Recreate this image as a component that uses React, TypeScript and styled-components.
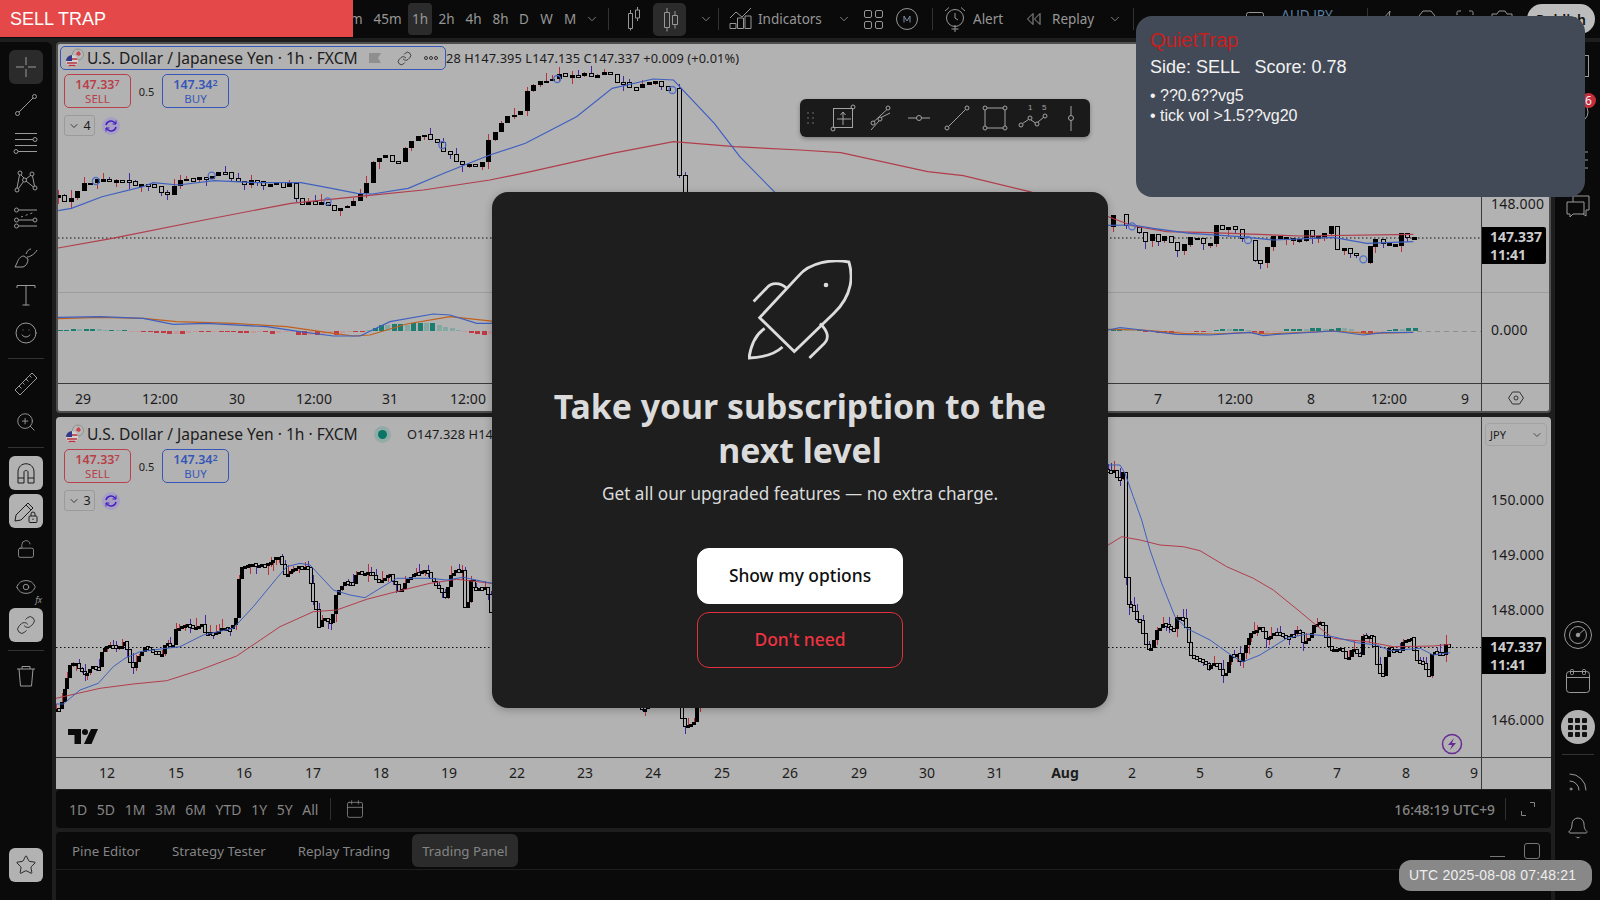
import React from 'react';
import styled, { createGlobalStyle } from 'styled-components';
import { Bell, Calendar, ChevronDown, Eye, Link, LockOpen, Rss, Smile, Star, ZoomIn } from 'lucide-react';

const uiFont = '"Noto Sans", "Open Sans", sans-serif';
const plainFont = '"Liberation Sans", Arial, sans-serif';

const GlobalStyle = createGlobalStyle`
  html, body { margin: 0; padding: 0; background: #1e1e1e; }
  * { box-sizing: border-box; }
`;

type Pt = [number, number];

// zoomed crops were read at different scales, so keys are converted to page px here
const fromTop = (pts: number[][]): Pt[] => pts.map(([x, y]) => [x / 1.96, y / 3]);
const fromLow = (pts: number[][]): Pt[] => pts.map(([x, y]) => [x / 3, 530 + y / 3]);
const fromLowR = (pts: number[][]): Pt[] => pts.map(([x, y]) => [1100 + x / 3, 460 + y / 3]);
const fromTopR = (pts: number[][]): Pt[] => pts.map(([x, y]) => [1100 + x / 3, 200 + y / 3]);
const fromMacd = (pts: number[][]): Pt[] => pts.map(([x, y]) => [x / 3, 230 + y / 3]);

const interp = (pts: Pt[], x: number) => {
  if (x <= pts[0][0]) return pts[0][1];
  for (let i = 1; i < pts.length; i++) {
    if (x <= pts[i][0]) {
      const [x0, y0] = pts[i - 1];
      const [x1, y1] = pts[i];
      return x1 === x0 ? y1 : y0 + ((x - x0) / (x1 - x0)) * (y1 - y0);
    }
  }
  return pts[pts.length - 1][1];
};

const makeRng = (seed: number) => {
  let s = seed;
  return () => {
    s = (s * 16807) % 2147483647;
    return s / 2147483647;
  };
};

type Bar = { x: number; top: number; bottom: number; filled: boolean; wickTop: number; wickBottom: number };

const buildBars = (keys: Pt[], from: number, to: number, step: number, seed: number, noise: number, wick: number) => {
  const rnd = makeRng(seed);
  const bars: Bar[] = [];
  let prev = interp(keys, from);
  for (let x = from; x <= to; x += step) {
    const close = interp(keys, x + step / 2) + (rnd() - 0.5) * noise;
    const top = Math.min(prev, close);
    const bottom = Math.max(prev, close);
    bars.push({
      x,
      top,
      bottom,
      filled: close < prev,
      wickTop: top - (rnd() > 0.5 ? rnd() * wick : 0),
      wickBottom: bottom + (rnd() > 0.6 ? rnd() * wick : 0),
    });
    prev = close;
  }
  return bars;
};

const topLeftKeys = fromTop([
  [114, 590], [124, 598], [140, 610], [160, 560], [190, 540], [250, 542], [270, 548], [300, 560], [340, 582], [360, 540], [410, 540],
  [440, 520], [480, 545], [540, 552], [575, 555], [590, 605], [640, 615], [665, 630], [700, 600], [720, 575], [730, 500], [760, 465],
  [790, 490], [805, 425], [830, 405], [850, 415], [890, 470], [905, 500], [950, 495], [965, 420], [995, 345], [1030, 335], [1040, 270],
  [1065, 250], [1100, 230], [1165, 225], [1200, 212], [1215, 245], [1250, 260], [1290, 245], [1310, 280], [1322, 262],
]);

// [x, top, bottom, filled] as read from the crop right of the dialog
const topRightBars: Bar[] = ([
  [40, 46, 80, 1], [78, 42, 75, 0], [118, 82, 97, 0], [136, 98, 124, 0], [157, 102, 124, 1], [175, 103, 125, 0], [193, 108, 124, 1],
  [214, 108, 128, 0], [232, 128, 152, 0], [253, 133, 152, 1], [271, 112, 134, 1], [290, 113, 116, 1], [310, 116, 130, 0], [329, 129, 131, 1],
  [349, 75, 132, 1], [367, 76, 88, 0], [385, 80, 90, 1], [406, 78, 88, 0], [425, 88, 116, 0], [464, 120, 182, 0], [481, 182, 187, 0],
  [502, 142, 188, 1], [520, 108, 142, 1], [540, 109, 111, 1], [558, 112, 114, 1], [578, 115, 119, 1], [597, 117, 119, 1], [617, 90, 122, 1],
  [637, 90, 110, 0], [655, 109, 112, 1], [673, 100, 112, 1], [694, 78, 102, 1], [712, 78, 148, 0], [731, 145, 148, 1], [751, 146, 160, 0],
  [769, 160, 166, 0], [809, 138, 190, 1], [826, 118, 140, 1], [848, 118, 130, 0], [866, 129, 131, 1], [886, 133, 136, 1], [904, 100, 137, 1],
  [922, 100, 112, 0], [943, 111, 113, 1],
] as number[][]).map(([x, t, b, f], i) => {
  const rnd = makeRng(i * 97 + 13);
  const wt = rnd() * 30;
  const wb = rnd() * 24;
  return {
    x: 1100 + x / 3,
    top: 200 + t / 3,
    bottom: 200 + b / 3,
    filled: !!f,
    wickTop: 200 + (t - wt) / 3,
    wickBottom: 200 + (b + wb) / 3,
  };
});

const topBars: Bar[] = [
  ...buildBars(topLeftKeys, 58, 672, 6.42, 4711, 6, 8),
  { x: 678.5, top: 88, bottom: 175, filled: false, wickTop: 84, wickBottom: 178 },
  { x: 685, top: 175, bottom: 260, filled: false, wickTop: 172, wickBottom: 260 },
  ...topRightBars,
];

const topBlue: Pt[] = [
  ...fromTop([
    [114, 632], [140, 625], [200, 590], [280, 560], [300, 548], [350, 555], [420, 542], [500, 548], [590, 548], [650, 565], [700, 580], [730, 582],
    [800, 565], [870, 520], [960, 465], [1030, 430], [1130, 350], [1200, 265], [1280, 237], [1320, 240], [1400, 370], [1450, 470], [1540, 610],
  ]),
  ...fromTopR([[-100, 60], [25, 76], [100, 75], [160, 85], [270, 100], [420, 110], [520, 120], [640, 115], [700, 112], [800, 130], [940, 125]]),
];
const topRed: Pt[] = [
  [58, 248],
  ...fromTop([
    [220, 715], [400, 660], [570, 610], [700, 590], [830, 570], [960, 540], [1040, 515], [1200, 460], [1320, 425], [1440, 440], [1568, 450],
    [1648, 458], [1818, 515], [1888, 527], [2018, 575],
  ]),
  ...fromTopR([[25, 50], [100, 78], [200, 95], [330, 98], [600, 108], [940, 103]]),
];

const lowKeys: Pt[] = [
  ...fromLow([
    [168, 540], [185, 535], [195, 485], [205, 450], [213, 405], [235, 400], [245, 425], [265, 430], [285, 410], [305, 410], [310, 360], [330, 350],
    [370, 345], [385, 330], [388, 385], [405, 415], [415, 390], [440, 350], [470, 365], [490, 370], [500, 340], [525, 345], [530, 295], [560, 285],
    [590, 290], [610, 280], [615, 310], [650, 310], [670, 295], [700, 295], [715, 260], [720, 150], [730, 110], [760, 105], [800, 105], [840, 80],
    [860, 135], [890, 110], [930, 115], [940, 200], [955, 240], [960, 295], [975, 260], [1000, 280], [1015, 185], [1040, 155], [1065, 165], [1075, 130],
    [1120, 125], [1140, 160], [1175, 130], [1205, 190], [1225, 150], [1250, 130], [1280, 120], [1300, 150], [1325, 180], [1340, 205], [1358, 130],
    [1390, 115], [1398, 215], [1402, 262], [1408, 215], [1415, 150], [1430, 180], [1465, 170], [1475, 250],
  ]),
  [640, 702], [646, 712], [650, 690], [680, 700], [686, 727], [696, 722], [700, 690], [720, 600], [1000, 500],
  ...fromLowR([
    [25, 30], [45, 30], [60, 65], [73, 40], [75, 350], [82, 350], [85, 430], [105, 440], [110, 480], [130, 480], [135, 550], [145, 555], [155, 580],
    [175, 510], [195, 490], [230, 510], [235, 475], [255, 475], [265, 520], [275, 580], [295, 600], [310, 600], [330, 625], [350, 605], [365, 630],
    [378, 650], [395, 590], [415, 580], [425, 605], [440, 560], [455, 520], [490, 500], [500, 540], [525, 520], [560, 525], [590, 525], [600, 505],
    [615, 555], [635, 530], [650, 490], [670, 485], [680, 525], [695, 575], [730, 565], [745, 605], [760, 565], [785, 585], [790, 525], [820, 530],
    [830, 570], [840, 640], [855, 650], [865, 565], [905, 570], [915, 540], [945, 530], [950, 600], [975, 610], [990, 650], [1000, 575], [1020, 575],
    [1035, 590], [1042, 550], [1050, 555],
  ]),
];
const lowBars = buildBars(lowKeys, 56, 1450, 2.86, 9127, 2.5, 10);

const lowBlue: Pt[] = [
  ...fromLow([
    [168, 522], [190, 522], [240, 480], [295, 460], [340, 410], [375, 385], [420, 365], [500, 355], [540, 350], [610, 315], [700, 295], [760, 230],
    [830, 145], [860, 110], [900, 100], [930, 105], [1000, 180], [1050, 195], [1095, 203], [1140, 175], [1190, 145], [1290, 145], [1340, 150],
    [1390, 142], [1475, 160], [1600, 200],
  ]),
  ...fromLowR([
    [0, 15], [25, 15], [60, 15], [75, 40], [100, 110], [125, 180], [150, 270], [185, 370], [225, 470], [260, 505], [330, 540], [400, 590], [430, 605],
    [480, 585], [560, 535], [620, 522], [700, 530], [770, 548], [830, 555], [870, 572], [960, 565], [1000, 585], [1050, 578],
  ]),
];
const lowRed: Pt[] = [
  ...fromLow([
    [168, 505], [300, 475], [400, 462], [500, 452], [600, 420], [710, 378], [840, 290], [940, 245], [1010, 240], [1100, 208], [1200, 182], [1290, 160],
    [1370, 148], [1475, 160], [1600, 200],
  ]),
  ...fromLowR([
    [0, 275], [25, 255], [65, 230], [120, 240], [180, 255], [250, 260], [300, 272], [380, 320], [460, 355], [520, 390], [600, 455], [650, 497], [700, 535],
    [800, 545], [880, 560], [1000, 558], [1050, 553],
  ]),
];

const macdBlueL = fromMacd([
  [174, 262], [300, 260], [430, 265], [520, 283], [620, 280], [800, 290], [900, 305], [1000, 318], [1080, 318], [1170, 275], [1300, 252], [1350, 255], [1430, 280], [1490, 280],
]);
const macdOrangeL = fromMacd([
  [174, 266], [300, 262], [430, 265], [530, 275], [700, 280], [860, 290], [1000, 310], [1060, 318], [1110, 315], [1220, 282], [1350, 260], [1490, 275],
]);
const macdBlueR = fromTopR([
  [0, 390], [25, 390], [60, 383], [100, 387], [230, 403], [330, 405], [450, 397], [490, 407], [530, 403], [700, 393], [790, 405], [850, 398], [940, 397],
]);
const macdOrangeR = fromTopR([[0, 388], [25, 388], [130, 390], [250, 400], [340, 402], [450, 397], [500, 402], [700, 393], [800, 400], [940, 397]]);

const histL = [
  1, 1, 2, 2, 2, 2, 2, 1, 1, 1, 1, -0.5, -0.5, -0.5, -1, -2, -2, -3, -3, -3, -2, -1, -1, -1, -0.5, -0.5, -0.5, -1, -2, -2, -2, -1, -1, -3, -2, -1, -1, -4, -4, -4, -4,
  -3, -2, -4, -2, -1, -1, -1, 1, 3, 6, 6, 7, 7, 6, 8, 8, 8, 8, 6, 4, 3, 1, -1, -2, -3, -4, -3,
];
const histR = [
  2, 2, 1, 1, 1, -1, -1, -2, -2, -3, -2, -1, -1, -1, -1, -0.5, 1, 2, 2, 2, 2, 1, -1, -3, -2, -1, -0.5, 2, 2, 2, 2, 3, 3, 2, 2, 3, 3, 2, -1, -2, -3, -2, -1, 1, 2, 2, 3, 3,
];

const polyline = (pts: Pt[]) => pts.map(([x, y]) => `${x.toFixed(1)},${y.toFixed(1)}`).join(' ');

type CandleProps = { bars: Bar[]; width: number; stroke: number; minBody: number };

const Candles = ({ bars, width, stroke, minBody }: CandleProps) => (
  <g shapeRendering="crispEdges">
    {bars.map((b, i) => {
      const cx = Math.round(b.x);
      const left = cx - Math.floor(width / 2);
      return (
        <g key={i}>
          <line x1={cx + 0.5} x2={cx + 0.5} y1={b.wickTop} y2={b.wickBottom} stroke={b.filled ? '#b8303a' : '#48289c'} />
          {b.filled ? (
            <rect x={left} y={b.top} width={width} height={Math.max(b.bottom - b.top, minBody)} fill="#000" />
          ) : (
            <rect x={left + 0.5} y={b.top} width={width - 1} height={Math.max(b.bottom - b.top, minBody)} fill="#b2b2b2" stroke="#000" strokeWidth={stroke} />
          )}
        </g>
      );
    })}
  </g>
);

const Histogram = ({ values, x0 }: { values: number[]; x0: number }) => (
  <g shapeRendering="crispEdges">
    {values.map((v, i) => {
      const prev = values[i - 1] ?? 0;
      const falling = Math.abs(v) < Math.abs(prev) || (Math.abs(v) === Math.abs(prev) && i % 3 === 0);
      const color = v > 0 ? (falling ? '#86a8a2' : '#1b7c70') : falling ? '#c29a9c' : '#bf3a42';
      return <rect key={i} x={x0 + i * 6.42} y={v > 0 ? 331 - v : 331} width={5} height={Math.max(Math.abs(v), 1)} fill={color} />;
    })}
  </g>
);

const Root = styled.div`
  position: relative;
  width: 1600px;
  height: 900px;
  overflow: hidden;
  background: #1e1e1e;
  display: grid;
  grid-template-columns: 1600px;
  grid-template-rows: 38px 858px;
  row-gap: 4px;
  font-family: ${uiFont};
`;

const TopBar = styled.header`
  display: flex;
  align-items: center;
  background: #0a0a0a;
  color: #979797;
  font-size: 13.5px;
  padding-left: 329px;
  min-width: 0;
  overflow: hidden;
  white-space: nowrap;
`;

const IntervalSlot = styled.div<{ $w: number }>`
  width: ${(p) => p.$w}px;
  flex: none;
  display: flex;
  justify-content: center;
`;

const Interval = styled.div<{ $active?: boolean }>`
  height: 32px;
  padding: 0 4px;
  display: flex;
  align-items: center;
  border-radius: 4px;
  background: ${(p) => (p.$active ? '#2b2b2b' : 'transparent')};
`;

const BarDivider = styled.span<{ $ml?: number; $mr?: number }>`
  width: 1px;
  height: 22px;
  background: #333;
  margin-left: ${(p) => p.$ml ?? 0}px;
  margin-right: ${(p) => p.$mr ?? 0}px;
  flex: none;
`;

const BarButton = styled.div<{ $active?: boolean; $w?: number; $ml?: number; $gap?: number; $start?: boolean }>`
  height: 33px;
  width: ${(p) => (p.$w ? `${p.$w}px` : 'auto')};
  margin-left: ${(p) => p.$ml ?? 0}px;
  flex: none;
  display: flex;
  align-items: center;
  justify-content: ${(p) => (p.$start ? 'flex-start' : 'center')};
  gap: ${(p) => p.$gap ?? 6}px;
  border-radius: 5px;
  color: #979797;
  background: ${(p) => (p.$active ? '#2b2b2b' : 'transparent')};
`;

const ChevSlot = styled.span<{ $ml?: number }>`
  margin-left: ${(p) => p.$ml ?? 0}px;
  width: 14px;
  height: 14px;
  display: flex;
  flex: none;
  color: #979797;
`;

const SymbolText = styled.span`
  color: #5a7ea0;
  font-size: 13.5px;
  width: 58px;
  margin-left: 13px;
  margin-top: -9px;
  text-align: center;
  flex: none;
`;

const PublishPill = styled.div`
  margin-left: 6px;
  width: 68px;
  height: 30px;
  flex: none;
  border-radius: 15px;
  background: #bcbcbc;
  color: #111;
  font-size: 14px;
  font-weight: 600;
  display: flex;
  align-items: center;
  justify-content: center;
`;

const Body = styled.div`
  display: grid;
  grid-template-columns: 52px 1495px 45px;
  column-gap: 4px;
  min-height: 0;
`;

const LeftRail = styled.nav`
  background: #0a0a0a;
  border-radius: 0 6px 0 0;
  padding: 6px 0 16px;
  display: flex;
  flex-direction: column;
  align-items: center;
`;

const Tool = styled.div<{ $tone?: 'dark' | 'light' }>`
  width: 34px;
  height: 34px;
  margin: 2px 0;
  flex: none;
  display: flex;
  align-items: center;
  justify-content: center;
  position: relative;
  border-radius: 6px;
  color: ${(p) => (p.$tone === 'light' ? '#1c1c1c' : '#9a9a9a')};
  background: ${(p) => (p.$tone === 'light' ? '#b2b2b2' : p.$tone === 'dark' ? '#2b2b2b' : 'transparent')};
`;

const RailDivider = styled.span`
  width: 36px;
  height: 1px;
  background: #333;
  margin: 6px 0;
  flex: none;
`;

const StarSlot = styled.div`
  margin-top: auto;
`;

const FxMark = styled.span`
  position: absolute;
  right: 1px;
  bottom: 0;
  font-size: 8px;
  line-height: 9px;
  font-style: italic;
  color: #9a9a9a;
`;

const Center = styled.main`
  display: flex;
  flex-direction: column;
  min-height: 0;
  min-width: 0;
`;

const ChartPane = styled.section<{ $selected?: boolean }>`
  display: grid;
  flex: none;
  height: ${(p) => (p.$selected ? 371 : 372)}px;
  margin-bottom: ${(p) => (p.$selected ? 4 : 1)}px;
  grid-template-columns: 1fr ${(p) => (p.$selected ? 68 : 70)}px;
  grid-template-rows: ${(p) => (p.$selected ? '340px' : '341px')} 1fr;
  background: #b2b2b2;
  border-radius: 4px 4px ${(p) => (p.$selected ? '4px 4px' : '0 0')};
  border: ${(p) => (p.$selected ? '2px solid #4e4e4e' : 'none')};
  overflow: hidden;
  color: #1c1c1c;
`;

const Canvas = styled.div`
  position: relative;
  border-bottom: 1px solid #3a3a3a;
  min-width: 0;
`;

const ChartSvg = styled.svg`
  display: block;
  width: 100%;
  height: 100%;
`;

const PriceAxis = styled.div`
  position: relative;
  border-left: 1px solid #3a3a3a;
  border-bottom: 1px solid #3a3a3a;
  font-size: 14px;
`;

const PriceLabel = styled.span`
  position: absolute;
  left: 9px;
  transform: translateY(-57%);
  letter-spacing: 0.2px;
`;

const PriceTag = styled.div`
  position: absolute;
  left: 0;
  width: 64px;
  height: 37px;
  background: #000;
  color: #cdcdcd;
  border-radius: 0 2px 2px 0;
  font-size: 14px;
  font-weight: 700;
  line-height: 18px;
  padding: 1px 0 0 8px;
  z-index: 1;
`;

const Separator = styled.div`
  position: absolute;
  left: 0;
  right: 0;
  height: 1px;
  background: #9c9c9c;
`;

const TimeAxis = styled.div`
  position: relative;
  font-size: 14px;
  min-width: 0;
`;

const TimeLabel = styled.span<{ $bold?: boolean; $y: number }>`
  position: absolute;
  top: ${(p) => p.$y}%;
  transform: translate(-50%, -50%);
  font-weight: ${(p) => (p.$bold ? 700 : 400)};
`;

const AxisCorner = styled.div`
  border-left: 1px solid #3a3a3a;
  display: flex;
  align-items: center;
  justify-content: center;
`;

const Legend = styled.div`
  position: absolute;
  display: flex;
  align-items: center;
  white-space: nowrap;
`;

const TitleBox = styled.div<{ $outlined?: boolean }>`
  height: 24px;
  display: flex;
  align-items: center;
  gap: 2px;
  padding: 0 6px 0 4px;
  border-radius: 5px;
  border: 1px solid ${(p) => (p.$outlined ? '#3556b8' : 'transparent')};
  font-size: 15.6px;
  color: #1c1c1c;
`;

const TitleText = styled.span`
  width: 272px;
  white-space: nowrap;
`;

const TitleGlyph = styled.span<{ $ml: number }>`
  margin-left: ${(p) => p.$ml}px;
  display: flex;
  flex: none;
`;

const Ohlc = styled.span`
  font-size: 12.8px;
  color: #1c1c1c;
  letter-spacing: 0.1px;
  overflow: hidden;
  display: block;
`;

const TradeRow = styled.div`
  position: absolute;
  display: flex;
  align-items: center;
`;

const TradeBox = styled.div<{ $side: 'sell' | 'buy' }>`
  width: 67px;
  height: 34px;
  border-radius: 5px;
  border: 1px solid ${(p) => (p.$side === 'sell' ? '#b8404a' : '#3556b8')};
  color: ${(p) => (p.$side === 'sell' ? '#b8404a' : '#3556b8')};
  display: flex;
  flex-direction: column;
  align-items: center;
  justify-content: center;
  font-size: 12.5px;
  line-height: 14px;
  font-weight: 600;
  sup {
    font-size: 9px;
    line-height: 0;
    vertical-align: 3px;
  }
`;

const TradeCaption = styled.span`
  font-size: 11.5px;
  font-weight: 400;
  line-height: 13px;
`;

const Spread = styled.span`
  width: 31px;
  text-align: center;
  font-size: 11px;
`;

const CollapseRow = styled.div`
  position: absolute;
  display: flex;
  align-items: center;
  gap: 7px;
`;

const CollapseChip = styled.div`
  width: 31px;
  height: 21px;
  border: 1px solid #9a9a9a;
  border-radius: 3px;
  font-size: 12.5px;
  display: flex;
  align-items: center;
  justify-content: center;
  gap: 3px;
`;

const SyncBadge = styled.div`
  width: 18px;
  height: 18px;
  border-radius: 50%;
  background: #a79fc4;
  display: flex;
  align-items: center;
  justify-content: center;
`;

const LiveDot = styled.span`
  width: 9px;
  height: 9px;
  border-radius: 50%;
  background: #0b7565;
  box-shadow: 0 0 0 4px #93aba6;
  margin: 0 20px 0 12px;
  flex: none;
`;

const CurrencyChip = styled.div`
  position: absolute;
  right: 4px;
  top: 6px;
  width: 62px;
  height: 23px;
  border: 1px solid #a2a2a2;
  border-radius: 4px;
  font-size: 11px;
  display: flex;
  align-items: center;
  justify-content: space-between;
  padding: 0 3px 0 4px;
`;

const Watermark = styled.div`
  position: absolute;
  left: 12px;
  bottom: 13px;
  display: flex;
`;

const BoltBadge = styled.div`
  position: absolute;
  left: 1385px;
  bottom: 2px;
  display: flex;
`;

const RangeBar = styled.div`
  flex: none;
  height: 38px;
  margin-bottom: 4px;
  background: #0a0a0a;
  border-radius: 4px;
  display: flex;
  align-items: center;
  padding: 0 15px 0 13px;
  color: #858585;
  font-size: 14px;
`;

const RangeItem = styled.span`
  margin-right: 9.6px;
`;

const RangeSep = styled.span<{ $ml?: number }>`
  width: 1px;
  height: 22px;
  background: #2f2f2f;
  margin: 0 14px 0 ${(p) => p.$ml ?? 2}px;
`;

const Clock = styled.span`
  margin-left: auto;
  font-size: 13.8px;
  font-weight: 500;
  margin-right: 10px;
`;

const BottomPanel = styled.div`
  flex: 1;
  background: #0a0a0a;
  border-radius: 4px 4px 0 0;
  color: #858585;
  font-size: 13.3px;
`;

const TabRow = styled.div`
  height: 38px;
  border-bottom: 1px solid #1e1e1e;
  display: flex;
  align-items: center;
  padding: 0 11px 0 16px;
  gap: 32px;
`;

const Tab = styled.span<{ $active?: boolean }>`
  height: 33px;
  display: flex;
  align-items: center;
  padding: 0 10px;
  margin: 0 -10px;
  border-radius: 6px;
  background: ${(p) => (p.$active ? '#2b2b2b' : 'transparent')};
`;

const PanelControls = styled.div`
  margin-left: auto;
  display: flex;
  align-items: center;
  gap: 19px;
`;

const MinimizeMark = styled.span`
  width: 15px;
  height: 1px;
  background: #777;
  margin-top: 12px;
`;

const MaximizeMark = styled.span`
  width: 16px;
  height: 16px;
  border: 1px solid #777;
  border-radius: 3px;
`;

const RightRail = styled.aside`
  background: #0a0a0a;
  display: flex;
  flex-direction: column;
  align-items: center;
  padding-bottom: 3px;
  color: #9a9a9a;
`;

const RailItem = styled.div<{ $h?: number }>`
  height: ${(p) => p.$h ?? 46}px;
  flex: none;
  position: relative;
  width: 100%;
  display: flex;
  align-items: center;
  justify-content: center;
`;

const CountBadge = styled.span`
  position: absolute;
  left: 26px;
  top: 4px;
  width: 15px;
  height: 15px;
  border-radius: 50%;
  background: #c42e3c;
  color: #eee;
  font-size: 12px;
  line-height: 15px;
  text-align: center;
`;

const RailPush = styled.div`
  margin-top: auto;
`;

const AppGrid = styled.div`
  width: 34px;
  height: 34px;
  border-radius: 50%;
  background: #b2b2b2;
  display: grid;
  grid-template-columns: repeat(3, 5px);
  grid-auto-rows: 5px;
  gap: 2px;
  place-content: center;
`;

const AppDot = styled.i`
  background: #111;
  border-radius: 1px;
`;

const RailSep = styled.div`
  width: 32px;
  height: 1px;
  background: #333;
  margin: 4px 0;
`;

const SellBanner = styled.div`
  position: absolute;
  left: 0;
  top: 0;
  width: 353px;
  height: 37px;
  background: #e54848;
  color: #fff;
  font: 18px/38px ${plainFont};
  padding-left: 10px;
  z-index: 5;
`;

const InfoPanel = styled.div`
  position: absolute;
  left: 1136px;
  top: 16px;
  width: 449px;
  height: 181px;
  background: #434a57;
  border-radius: 16px;
  padding: 12px 14px;
  color: #f2f2f2;
  font-family: ${plainFont};
  z-index: 5;
`;

const InfoTitle = styled.div`
  color: #c81e1e;
  font-size: 20px;
  line-height: 24px;
`;

const InfoSide = styled.div`
  font-size: 18px;
  line-height: 26px;
  margin-top: 2px;
  margin-bottom: 6px;
  white-space: pre;
`;

const InfoLine = styled.div`
  font-size: 16px;
  line-height: 20px;
`;

const UtcBadge = styled.div`
  position: absolute;
  left: 1399px;
  top: 860px;
  width: 193px;
  height: 31px;
  border-radius: 12px;
  background: #888;
  color: #eee;
  font: 14px/30px ${plainFont};
  letter-spacing: 0.2px;
  padding-left: 10px;
  z-index: 5;
  white-space: nowrap;
`;

const DrawBar = styled.div`
  position: absolute;
  left: 800px;
  top: 99px;
  width: 290px;
  height: 38px;
  background: #1a1a1a;
  border-radius: 6px;
  box-shadow: 0 2px 4px rgba(0, 0, 0, 0.3);
  display: flex;
  align-items: center;
  padding-left: 7px;
  color: #a3a3a3;
  z-index: 2;
`;

const Grip = styled.div`
  width: 9px;
  margin-right: 9px;
  display: grid;
  grid-template-columns: repeat(2, 2px);
  grid-auto-rows: 2px;
  gap: 3px;
`;

const GripDot = styled.i`
  background: #444;
`;

const DrawTool = styled.div`
  width: 38px;
  height: 38px;
  display: flex;
  align-items: center;
  justify-content: center;
  flex: none;
`;

const Modal = styled.div`
  position: absolute;
  left: 492px;
  top: 192px;
  width: 616px;
  height: 516px;
  background: #1e1e1e;
  border-radius: 16px;
  box-shadow: 0 2px 8px rgba(0, 0, 0, 0.25);
  display: flex;
  flex-direction: column;
  align-items: center;
  padding-top: 68px;
  z-index: 4;
`;

const ModalTitle = styled.h2`
  margin: 24px 0 0;
  width: 540px;
  text-align: center;
  font-size: 33.8px;
  line-height: 44px;
  font-weight: 700;
  color: #dbdbdb;
`;

const ModalLead = styled.p`
  margin: 10px 0 0;
  font-size: 17.2px;
  line-height: 24px;
  color: #dbdbdb;
`;

const ModalButton = styled.button<{ $variant: 'solid' | 'outline' }>`
  width: 206px;
  height: 56px;
  margin-top: ${(p) => (p.$variant === 'solid' ? '42px' : '8px')};
  padding-bottom: 3px;
  border-radius: 12px;
  border: 1px solid ${(p) => (p.$variant === 'solid' ? '#fff' : '#e0313f')};
  background: ${(p) => (p.$variant === 'solid' ? '#fff' : 'transparent')};
  color: ${(p) => (p.$variant === 'solid' ? '#0f0f0f' : '#ee3342')};
  font: 500 17.4px ${uiFont};
`;

const Line = styled.svg.attrs({ fill: 'none', stroke: 'currentColor', strokeWidth: 1 })``;

const CandleIcon = ({ variant }: { variant: 'a' | 'b' }) => (
  <Line width="28" height="28" viewBox="0 0 28 28">
    {variant === 'a' ? (
      <path d="M9.500 8.500h4v15h-4zM11.500 5v3.500M11.500 23.500v2M16.500 5h4v8h-4zM18.500 2v3M18.500 13v3" />
    ) : (
      <path d="M8.500 7.500h5v15h-5zM11 3v4.500M11 22.500v4M16.500 10.500h5v9h-5zM19 6v4.500M19 19.500v4" />
    )}
  </Line>
);

const IndicatorsIcon = () => (
  <Line width="28" height="28" viewBox="0 0 28 28">
    <path d="M3 23.500h6v-5H3zM10.500 23.500h6V13h-6zM18 23.500h6V11h-6zM3 13l6-6 6 5 9-9" />
  </Line>
);

const LayoutIcon = () => (
  <Line width="22" height="22" viewBox="0 0 22 22">
    <rect x="2.500" y="2.500" width="7" height="7" rx="1.500" />
    <rect x="13.500" y="2.500" width="7" height="7" rx="1.500" />
    <rect x="2.500" y="13.500" width="7" height="7" rx="1.500" />
    <rect x="13.500" y="13.500" width="7" height="7" rx="1.500" />
  </Line>
);

const MCircle = () => (
  <Line width="22" height="22" viewBox="0 0 22 22" stroke="#555">
    <circle cx="11" cy="11" r="10.500" />
    <path d="M8 14.500V8l3 5 3-5v6.500" stroke="#7f8ea0" />
  </Line>
);

const AlertIcon = () => (
  <Line width="24" height="28" viewBox="0 0 24 28">
    <circle cx="12" cy="13" r="8.500" />
    <path d="M12 8v5l3 2M2 6l4-3.500M22 6l-4-3.500M12 20v7M8.500 24h7" />
  </Line>
);

const ReplayIcon = () => (
  <Line width="18" height="18" viewBox="0 0 18 18">
    <path d="M8 3.500L2.500 9 8 14.500zM15 3.500L9.500 9l5.500 5.500z" />
  </Line>
);

const Chev = ({ ml = 0 }: { ml?: number }) => (
  <ChevSlot $ml={ml}>
    <ChevronDown size={14} strokeWidth={1.4} />
  </ChevSlot>
);

const toolIcons: Record<string, React.ReactNode> = {
  cross: <path d="M14 4v8M14 16v8M4 14h8M16 14h8" />,
  trend: (
    <>
      <circle cx="5.500" cy="22.500" r="2" />
      <circle cx="22.500" cy="5.500" r="2" />
      <path d="M7 21L21 7" />
    </>
  ),
  fib: (
    <>
      <path d="M3 4.500h22M3 10.500h18M3 16.500h22M6 22.500h19" />
      <circle cx="23" cy="10.500" r="2" />
      <circle cx="4" cy="22.500" r="2" />
    </>
  ),
  xabcd: (
    <>
      <circle cx="8" cy="6" r="2" />
      <circle cx="20" cy="7" r="2" />
      <circle cx="12.500" cy="13" r="2" />
      <circle cx="5" cy="23" r="2" />
      <circle cx="23" cy="21" r="2" />
      <path d="M9 8l3 3M7.500 8L5 21M14 12l5-4M6.500 21.500l5-7M14 14l7.500 6M20.500 9l2 10" />
    </>
  ),
  pitch: (
    <>
      <circle cx="4.500" cy="5" r="2" />
      <circle cx="4.500" cy="15" r="2" />
      <circle cx="4.500" cy="21" r="2" />
      <circle cx="23" cy="15" r="2" />
      <path d="M7 5h18M7 15h14M7 21h18" />
      <path d="M9 12l14-5" strokeDasharray="2 3" />
    </>
  ),
  brush: <path d="M3 24h8c3-1 5-4 5-8l-4-3c-4 0-6 4-7 7zM14 11c1-3 3-5 5-5M15 14c3 0 8-3 10-7" />,
  text: <path d="M5 7V4.500h18V7M14 4.500V24M10.500 24h7" />,
  ruler: <path d="M3 20L20 3l5 5L8 25zM7 16l2.500 2.500M10.500 12.500l2 2M14 9l2.500 2.500M17.500 5.500l2 2" />,
  magnet: <path d="M6 24h6V13c0-2 4-2 4 0v11h6V13C22 2 6 2 6 13zM6 19h6M16 19h6" />,
  pencilLock: (
    <>
      <path d="M3 24l1-6L16 6l5 5L9 23zM14 8l5 5" />
      <rect x="17" y="19" width="8" height="6.500" rx="1" fill="#b2b2b2" />
      <path d="M19 19v-2a2 2 0 014 0v2M21 21.500v1.500" />
    </>
  ),
  trash: <path d="M5 7h18M10 7V4.500h8V7M7 7l1.500 17h11L21 7" />,
};

const ToolIcon = ({ name }: { name: string }) => (
  <Line width="28" height="28" viewBox="0 0 28 28">
    {toolIcons[name]}
  </Line>
);

const drawIcons: React.ReactNode[] = [
  <>
    <rect x="5.500" y="5.500" width="19" height="19" />
    <circle cx="25" cy="4" r="2" />
    <circle cx="5" cy="26" r="2" />
    <path d="M15 9v13M9 16h14M12.500 12L15 9l2.500 3" />
  </>,
  <>
    <circle cx="7" cy="20" r="2" />
    <circle cx="14" cy="16" r="2" />
    <circle cx="22" cy="5" r="2" />
    <path d="M8 18.500L21 6.500M5 27L13 18M15 14.500L24 10" />
  </>,
  <>
    <circle cx="15" cy="15" r="2.500" />
    <path d="M4 15h8.500M17.500 15h8.500" />
  </>,
  <>
    <circle cx="5" cy="25" r="2" />
    <circle cx="25" cy="5" r="2" />
    <path d="M6.500 23.500l17-17" />
  </>,
  <>
    <path d="M7 5h16M7 25h16M5 7v16M25 7v16" />
    <circle cx="5" cy="5" r="2" />
    <circle cx="25" cy="5" r="2" />
    <circle cx="5" cy="25" r="2" />
    <circle cx="25" cy="25" r="2" />
  </>,
  <>
    <circle cx="3" cy="22" r="2" />
    <circle cx="12" cy="15" r="2" />
    <circle cx="19" cy="21" r="2" />
    <circle cx="27" cy="13" r="2" />
    <path d="M4.500 20.500l6-4M13 17l4.500 3M20 19l6-5" />
    <text x="10" y="7" fontSize="8" fill="currentColor" stroke="none" fontFamily={plainFont}>
      1
    </text>
    <text x="24" y="7" fontSize="8" fill="currentColor" stroke="none" fontFamily={plainFont}>
      5
    </text>
  </>,
  <>
    <circle cx="15" cy="15" r="2.500" />
    <path d="M15 3v9.500M15 17.500V28" />
  </>,
];

const Flag = ({ label }: { label: string }) => (
  <svg width="20" height="20" viewBox="0 0 20 20" aria-label={label}>
    <circle cx="13" cy="6.500" r="5.500" fill="#b7b7b7" stroke="#8f8f8f" strokeWidth="1" />
    <path d="M11 6.500a4 4 0 013-3.500l2 3-2 2z" fill="#c9434c" />
    <circle cx="7" cy="13" r="6" fill="#d2d2d2" />
    <path d="M1.600 11h10.800M2 15h10M3.500 17.500h7" stroke="#b8333d" strokeWidth="1.600" />
    <path d="M1 13a6 6 0 016-6v6z" fill="#2f3a8c" />
  </svg>
);

const SyncIcon = () => (
  <svg width="14" height="14" viewBox="0 0 14 14" fill="none" stroke="#4620bf" strokeWidth="1.500">
    <path d="M2 6a5 5 0 018.500-2.500L12 5M12 8a5 5 0 01-8.500 2.500L2 9" />
    <path d="M12 1.500V5H8.500M2 12.500V9h3.500" strokeWidth="1" />
  </svg>
);

const TvLogo = () => (
  <svg width="30" height="15" viewBox="0 0 30 15" fill="#0b0b0b">
    <path d="M0 0h13v15H6.500V6H0z" />
    <circle cx="17" cy="3" r="3" />
    <path d="M23 0h7l-6.500 15H16z" />
  </svg>
);

const ModalRocket = () => (
  <svg width="104" height="100" viewBox="748 260 104 100" fill="none" stroke="#dcdcdc" strokeWidth="2.800">
    <path d="M759.600 317.700L798.300 276.100C810 262 832 259 848.900 262C853 275 853 295 833.900 313.300L794.300 351.500Z" />
    <circle cx="826" cy="285" r="2.300" fill="#dcdcdc" stroke="none" />
    <path d="M753.600 301.500L766.700 288C771 282.500 780 282 786.400 288" />
    <path d="M820 323.400C829 332 829 339 824 343.700L809.400 358" />
    <path d="M764.700 328.500C756 334 751 345 748.900 358C762 357.500 775 354 782.500 347" />
  </svg>
);

const intervals: [string, number][] = [
  ['30m', 39], ['45m', 39], ['1h', 26], ['2h', 27], ['4h', 27], ['8h', 27], ['D', 20], ['W', 25], ['M', 22],
];
const ranges = ['1D', '5D', '1M', '3M', '6M', 'YTD', '1Y', '5Y', 'All'];

const topTimes: [string, number][] = [
  ['29', 83], ['12:00', 160], ['30', 237], ['12:00', 314], ['31', 390], ['12:00', 468], ['7', 1158], ['12:00', 1235], ['8', 1311], ['12:00', 1389], ['9', 1465],
];
const lowTimes: [string, number][] = [
  ['12', 107], ['15', 176], ['16', 244], ['17', 313], ['18', 381], ['19', 449], ['22', 517], ['23', 585], ['24', 653], ['25', 722], ['26', 790], ['29', 859],
  ['30', 927], ['31', 995], ['Aug', 1065], ['2', 1132], ['5', 1200], ['6', 1269], ['7', 1337], ['8', 1406], ['9', 1474],
];
const lowPrices: [string, number][] = [
  ['150.000', 501], ['149.000', 556], ['148.000', 611], ['146.000', 721],
];

const topCircles: Pt[] = [
  ...fromTop([[188, 543], [415, 527], [642, 604], [867, 435], [1092, 237], [1318, 270]]),
  ...fromTopR([[96, 79], [444, 120], [790, 178]]),
];

const TradeWidget = ({ left, top, count, collapseTop }: { left: number; top: number; count: number; collapseTop: number }) => (
  <>
    <TradeRow style={{ left, top }}>
      <TradeBox $side="sell">
        <span>
          147.33<sup>7</sup>
        </span>
        <TradeCaption>SELL</TradeCaption>
      </TradeBox>
      <Spread>0.5</Spread>
      <TradeBox $side="buy">
        <span>
          147.34<sup>2</sup>
        </span>
        <TradeCaption>BUY</TradeCaption>
      </TradeBox>
    </TradeRow>
    <CollapseRow style={{ left, top: collapseTop }}>
      <CollapseChip>
        <ChevronDown size={12} strokeWidth={1.6} />
        {count}
      </CollapseChip>
      <SyncBadge>
        <SyncIcon />
      </SyncBadge>
    </CollapseRow>
  </>
);

function TopChart() {
  return (
    <ChartPane $selected>
      <Canvas>
        <ChartSvg viewBox="58 44 1423 339" preserveAspectRatio="none">
          <path d="M58 238H1481" stroke="#111" strokeDasharray="1.500 2.500" />
          <Candles bars={topBars} width={5} stroke={1} minBody={2.5} />
          <polyline points={polyline(topRed)} fill="none" stroke="#b23d4c" strokeWidth="1.200" />
          <polyline points={polyline(topBlue)} fill="none" stroke="#3f60c0" strokeWidth="1.200" />
          {topCircles.map(([x, y], i) => (
            <circle key={i} cx={x} cy={y} r="3.500" fill="none" stroke="#4f70c8" strokeWidth="1.300" />
          ))}
          <Histogram values={histL} x0={58} />
          <Histogram values={histR} x0={1111} />
          <path d="M1417 331.500H1481" stroke="#8f8f8f" strokeDasharray="5 4" />
          <polyline points={polyline(macdOrangeL)} fill="none" stroke="#c0601c" strokeWidth="1.200" />
          <polyline points={polyline(macdOrangeR)} fill="none" stroke="#c0601c" strokeWidth="1.200" />
          <polyline points={polyline(macdBlueL)} fill="none" stroke="#3f60c0" strokeWidth="1.200" />
          <polyline points={polyline(macdBlueR)} fill="none" stroke="#3f60c0" strokeWidth="1.200" />
        </ChartSvg>
        <Separator style={{ top: 248 }} />
        <Legend style={{ left: 2, top: 2 }}>
          <TitleBox $outlined>
            <Flag label="USD" />
            <TitleText>U.S. Dollar / Japanese Yen · 1h · FXCM</TitleText>
            <TitleGlyph $ml={7}>
              <svg width="14" height="14" viewBox="0 0 14 14" fill="#8f8f8f">
                <path d="M1 2h12l-3 5 3 5H1z" />
              </svg>
            </TitleGlyph>
            <TitleGlyph $ml={13}>
              <Link size={15} strokeWidth={1.2} />
            </TitleGlyph>
            <TitleGlyph $ml={9}>
              <svg width="16" height="6" viewBox="0 0 16 6" fill="none" stroke="#333">
                <circle cx="3" cy="3" r="1.500" />
                <circle cx="8" cy="3" r="1.500" />
                <circle cx="13" cy="3" r="1.500" />
              </svg>
            </TitleGlyph>
          </TitleBox>
          <Ohlc>28 H147.395 L147.135 C147.337 +0.009 (+0.01%)</Ohlc>
        </Legend>
        <TradeWidget left={6} top={30} count={4} collapseTop={71} />
      </Canvas>
      <PriceAxis>
        <PriceLabel style={{ top: 161 }}>148.000</PriceLabel>
        <PriceTag style={{ top: 183 }}>
          147.337
          <br />
          11:41
        </PriceTag>
        <Separator style={{ top: 248 }} />
        <PriceLabel style={{ top: 287 }}>0.000</PriceLabel>
      </PriceAxis>
      <TimeAxis>
        {topTimes.map(([t, x], i) => (
          <TimeLabel key={i} $y={50} style={{ left: x - 58 }}>
            {t}
          </TimeLabel>
        ))}
      </TimeAxis>
      <AxisCorner>
        <svg width="18" height="18" viewBox="0 0 18 18" fill="none" stroke="#333">
          <path d="M5.500 3h7L16.500 9l-4 6h-7L1.500 9z" />
          <circle cx="9" cy="9" r="2" />
        </svg>
      </AxisCorner>
    </ChartPane>
  );
}

function LowerChart() {
  return (
    <ChartPane>
      <Canvas>
        <ChartSvg viewBox="56 417 1425 340" preserveAspectRatio="none">
          <path d="M56 647.500H1481" stroke="#111" strokeDasharray="1.500 2.500" />
          <Candles bars={lowBars} width={4} stroke={1} minBody={3} />
          <polyline points={polyline(lowRed)} fill="none" stroke="#b23d4c" strokeWidth="1" />
          <polyline points={polyline(lowBlue)} fill="none" stroke="#3f60c0" strokeWidth="1" />
        </ChartSvg>
        <Legend style={{ left: 4, top: 5 }}>
          <TitleBox>
            <Flag label="USD" />
            <TitleText>U.S. Dollar / Japanese Yen · 1h · FXCM</TitleText>
          </TitleBox>
          <LiveDot />
          <Ohlc>O147.328 H14</Ohlc>
        </Legend>
        <TradeWidget left={8} top={32} count={3} collapseTop={73} />
        <Watermark>
          <TvLogo />
        </Watermark>
        <BoltBadge>
          <svg width="22" height="22" viewBox="0 0 22 22" fill="none" stroke="#6a2a96" strokeWidth="1.500">
            <circle cx="11" cy="11" r="9.500" />
            <path d="M13 5l-6 7h4l-2 5 6-7h-4z" fill="#6a2a96" stroke="none" />
          </svg>
        </BoltBadge>
      </Canvas>
      <PriceAxis>
        {lowPrices.map(([p, y]) => (
          <PriceLabel key={p} style={{ top: y - 417 }}>
            {p}
          </PriceLabel>
        ))}
        <CurrencyChip>
          JPY
          <ChevronDown size={12} strokeWidth={1.4} />
        </CurrencyChip>
        <PriceTag style={{ top: 220 }}>
          147.337
          <br />
          11:41
        </PriceTag>
      </PriceAxis>
      <TimeAxis>
        {lowTimes.map(([t, x]) => (
          <TimeLabel key={`${t}${x}`} $y={45} $bold={t === 'Aug'} style={{ left: x - 56 }}>
            {t}
          </TimeLabel>
        ))}
      </TimeAxis>
      <AxisCorner />
    </ChartPane>
  );
}

export default function App() {
  return (
    <Root>
      <GlobalStyle />
      <TopBar>
        {intervals.map(([t, w]) => (
          <IntervalSlot key={t} $w={w}>
            <Interval $active={t === '1h'}>{t}</Interval>
          </IntervalSlot>
        ))}
        <Chev ml={4} />
        <BarDivider $ml={9} $mr={7} />
        <BarButton $w={34}>
          <CandleIcon variant="a" />
        </BarButton>
        <BarButton $w={33} $ml={3} $active>
          <CandleIcon variant="b" />
        </BarButton>
        <BarButton $w={34} $ml={3}>
          <Chev />
        </BarButton>
        <BarDivider $ml={-5} />
        <BarButton $w={104} $ml={8} $gap={3} $start>
          <IndicatorsIcon />
          Indicators
        </BarButton>
        <Chev ml={6} />
        <BarButton $w={36} $ml={4}>
          <LayoutIcon />
        </BarButton>
        <BarButton $w={32}>
          <MCircle />
        </BarButton>
        <BarDivider $ml={9} />
        <BarButton $w={62} $ml={10} $start>
          <AlertIcon />
          Alert
        </BarButton>
        <BarButton $w={70} $ml={20} $gap={9} $start>
          <ReplayIcon />
          Replay
        </BarButton>
        <Chev ml={13} />
        <BarDivider $ml={11} />
        <BarButton $w={40} />
        <BarButton $w={44} />
        <BarButton $w={20} $ml={27}>
          <Line width="18" height="18" viewBox="0 0 18 18">
            <rect x="0.500" y="2.500" width="17" height="13" rx="2" />
          </Line>
        </BarButton>
        <SymbolText>AUD JPY</SymbolText>
        <BarDivider $ml={31} $mr={8} />
        <BarButton $w={28}>
          <Line width="18" height="18" viewBox="0 0 18 18">
            <path d="M3 8l6-7-1 6h7l-7 9 1-6z" />
          </Line>
        </BarButton>
        <BarButton $w={40} $ml={3}>
          <Line width="20" height="18" viewBox="0 0 20 18">
            <path d="M2 6l4-5h8l4 5v10H2z" />
          </Line>
        </BarButton>
        <BarButton $w={36}>
          <Line width="18" height="18" viewBox="0 0 18 18">
            <path d="M1 5V2.500A1.500 1.500 0 012.500 1H5M13 1h2.500A1.500 1.500 0 0117 2.500V5M1 13v2.500A1.500 1.500 0 002.500 17H5M13 17h2.500a1.500 1.500 0 001.500-1.500V13" />
          </Line>
        </BarButton>
        <BarButton $w={38}>
          <Line width="22" height="18" viewBox="0 0 22 18">
            <path d="M1 4h5l2-3h6l2 3h5v13H1z" />
          </Line>
        </BarButton>
        <PublishPill>Publish</PublishPill>
      </TopBar>
      <Body>
        <LeftRail>
          <Tool $tone="dark">
            <ToolIcon name="cross" />
          </Tool>
          <Tool>
            <ToolIcon name="trend" />
          </Tool>
          <Tool>
            <ToolIcon name="fib" />
          </Tool>
          <Tool>
            <ToolIcon name="xabcd" />
          </Tool>
          <Tool>
            <ToolIcon name="pitch" />
          </Tool>
          <Tool>
            <ToolIcon name="brush" />
          </Tool>
          <Tool>
            <ToolIcon name="text" />
          </Tool>
          <Tool>
            <Smile size={24} strokeWidth={1} />
          </Tool>
          <RailDivider />
          <Tool>
            <ToolIcon name="ruler" />
          </Tool>
          <Tool>
            <ZoomIn size={22} strokeWidth={1} />
          </Tool>
          <RailDivider />
          <Tool $tone="light">
            <ToolIcon name="magnet" />
          </Tool>
          <Tool $tone="light">
            <ToolIcon name="pencilLock" />
          </Tool>
          <Tool>
            <LockOpen size={20} strokeWidth={1} />
          </Tool>
          <Tool>
            <Eye size={22} strokeWidth={1} />
            <FxMark>fx</FxMark>
          </Tool>
          <Tool $tone="light">
            <Link size={20} strokeWidth={1} />
          </Tool>
          <RailDivider />
          <Tool>
            <ToolIcon name="trash" />
          </Tool>
          <StarSlot>
            <Tool $tone="light">
              <Star size={22} strokeWidth={1} />
            </Tool>
          </StarSlot>
        </LeftRail>
        <Center>
          <TopChart />
          <LowerChart />
          <RangeBar>
            {ranges.map((r) => (
              <RangeItem key={r}>{r}</RangeItem>
            ))}
            <RangeSep />
            <Calendar size={20} strokeWidth={1} />
            <Clock>16:48:19 UTC+9</Clock>
            <RangeSep $ml={0} />
            <Line width="16" height="16" viewBox="0 0 16 16">
              <path d="M10 1.500h4.500V6M6 14.500H1.500V10" />
            </Line>
          </RangeBar>
          <BottomPanel>
            <TabRow>
              <Tab>Pine Editor</Tab>
              <Tab>Strategy Tester</Tab>
              <Tab>Replay Trading</Tab>
              <Tab $active>Trading Panel</Tab>
              <PanelControls>
                <MinimizeMark />
                <MaximizeMark />
              </PanelControls>
            </TabRow>
          </BottomPanel>
        </Center>
        <RightRail>
          <RailItem $h={47}>
            <Line width="24" height="24" viewBox="0 0 24 24">
              <rect x="3.500" y="1.500" width="19" height="21" />
            </Line>
          </RailItem>
          <RailItem $h={47}>
            <Line width="24" height="26" viewBox="0 0 24 26">
              <circle cx="12" cy="12" r="10" />
            </Line>
            <CountBadge>6</CountBadge>
          </RailItem>
          <RailItem $h={47}>
            <Line width="24" height="24" viewBox="0 0 24 24">
              <path d="M2 4h20M2 12h20M2 20h20" />
            </Line>
          </RailItem>
          <RailItem $h={47}>
            <Line width="26" height="26" viewBox="0 0 26 26">
              <path d="M8 8V2h16v14h-3M2 8h17v12h-11l-3 3v-3H2zM21 16v6l-3-2" />
            </Line>
          </RailItem>
          <RailPush />
          <RailItem>
            <Line width="28" height="28" viewBox="0 0 28 28">
              <circle cx="14" cy="14" r="13.500" />
              <circle cx="14" cy="14" r="8.500" />
              <circle cx="14" cy="14" r="1.800" fill="currentColor" />
              <path d="M14 14l7-6" />
            </Line>
          </RailItem>
          <RailItem>
            <Line width="26" height="26" viewBox="0 0 26 26">
              <rect x="1.500" y="3.500" width="23" height="21" rx="3" />
              <path d="M1.500 9.500h23" />
              <rect x="5.500" y="1.500" width="3" height="5" rx="1" />
              <rect x="17.500" y="1.500" width="3" height="5" rx="1" />
            </Line>
          </RailItem>
          <RailItem>
            <AppGrid>
              {Array.from({ length: 9 }, (_, i) => (
                <AppDot key={i} />
              ))}
            </AppGrid>
          </RailItem>
          <RailSep />
          <RailItem>
            <Rss size={24} strokeWidth={1} />
          </RailItem>
          <RailItem>
            <Bell size={24} strokeWidth={1} />
          </RailItem>
          <RailItem />
        </RightRail>
      </Body>
      <SellBanner>SELL TRAP</SellBanner>
      <DrawBar>
        <Grip>
          {Array.from({ length: 6 }, (_, i) => (
            <GripDot key={i} />
          ))}
        </Grip>
        {drawIcons.map((icon, i) => (
          <DrawTool key={i}>
            <Line width="30" height="30" viewBox="0 0 30 30">
              {icon}
            </Line>
          </DrawTool>
        ))}
      </DrawBar>
      <Modal>
        <ModalRocket />
        <ModalTitle>Take your subscription to the next level</ModalTitle>
        <ModalLead>Get all our upgraded features — no extra charge.</ModalLead>
        <ModalButton $variant="solid">Show my options</ModalButton>
        <ModalButton $variant="outline">Don't need</ModalButton>
      </Modal>
      <InfoPanel>
        <InfoTitle>QuietTrap</InfoTitle>
        <InfoSide>Side: SELL   Score: 0.78</InfoSide>
        <InfoLine>• ??0.6??vg5</InfoLine>
        <InfoLine>• tick vol &gt;1.5??vg20</InfoLine>
      </InfoPanel>
      <UtcBadge>UTC 2025-08-08 07:48:21</UtcBadge>
    </Root>
  );
}
